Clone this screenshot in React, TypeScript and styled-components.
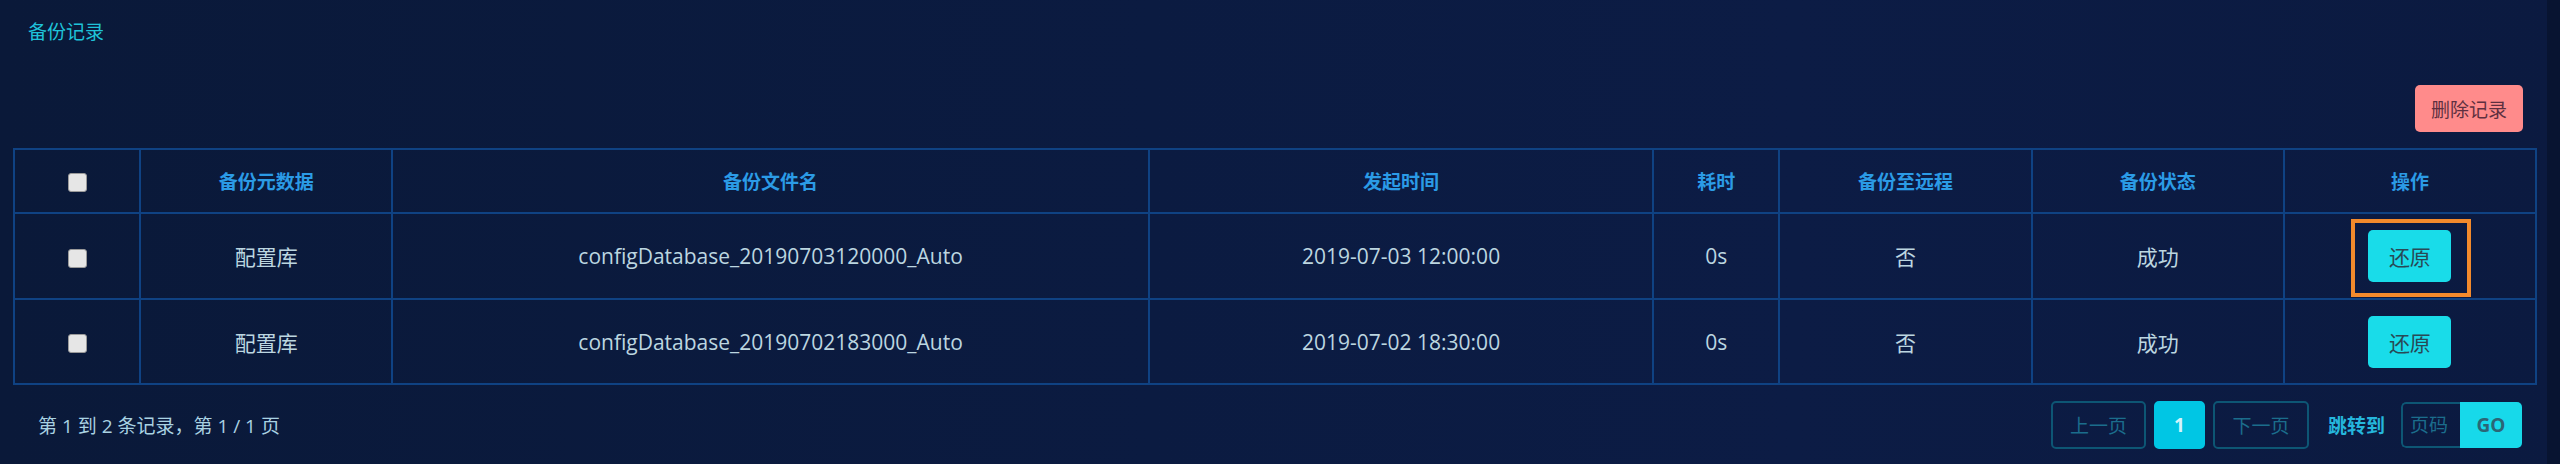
import React from "react";
import styled, { createGlobalStyle } from "styled-components";

const Global = createGlobalStyle`
  html, body { margin: 0; padding: 0; background: #0b1a3d; }
  body { font-family: "Open Sans", "Noto Sans CJK SC", sans-serif; }
  * { box-sizing: border-box; }
`;

const FONT = `"Open Sans", "Noto Sans CJK SC", sans-serif`;

const Page = styled.div`
  width: 2560px;
  height: 464px;
  display: flex;
  overflow: hidden;
  background: linear-gradient(90deg, #0a1939 0%, #0b1b41 45%, #0c1c45 70%, #0b1a40 100%);
`;

const Panel = styled.section`
  flex: 1;
  display: flex;
  flex-direction: column;
  padding: 20px 10px 0 13px;
`;

const Edge = styled.div`
  width: 13px;
  background: #081431;
`;

const Title = styled.h2`
  margin: 0 0 0 15px;
  font-size: 19px;
  line-height: 24px;
  font-weight: 400;
  color: #1fc3d9;
`;

const Toolbar = styled.div`
  display: flex;
  justify-content: flex-end;
  padding-right: 14px;
  margin-top: 41px;
`;

const DeleteButton = styled.button`
  width: 108px;
  height: 47px;
  border: none;
  border-radius: 5px;
  background: #ff8b8b;
  color: #5e3040;
  font-family: ${FONT};
  font-size: 19px;
  padding: 0;
`;

const Table = styled.table`
  margin-top: 16px;
  width: 100%;
  border-collapse: collapse;
  table-layout: fixed;
  border: 2px solid #0f4283;
`;

const HeadCell = styled.th`
  height: 64px;
  padding: 0;
  border: 2px solid #0f4283;
  color: #2b9be6;
  font-size: 19px;
  font-weight: 700;
  text-align: center;
  vertical-align: middle;
`;

const Cell = styled.td<{ $h: number }>`
  height: ${(p) => p.$h}px;
  padding: 0;
  border: 2px solid #0f4283;
  color: #bcd6e0;
  font-size: 21px;
  text-align: center;
  vertical-align: middle;
`;

const Check = styled.input`
  appearance: none;
  -webkit-appearance: none;
  width: 19px;
  height: 19px;
  margin: 0;
  border: 1px solid #9a9a9a;
  border-radius: 3px;
  background: #e6e6e6;
  vertical-align: middle;
`;

const RestoreWrap = styled.span`
  position: relative;
  display: inline-block;
  vertical-align: middle;
`;

const RestoreButton = styled.button`
  display: block;
  width: 83px;
  height: 52px;
  border: none;
  border-radius: 5px;
  background: #19dce9;
  color: #284a56;
  font-family: ${FONT};
  font-size: 21px;
  padding: 0;
`;

const Highlight = styled.span`
  position: absolute;
  top: -11px;
  left: -17px;
  right: -20px;
  bottom: -15px;
  border: 4px solid #f28a2c;
  pointer-events: none;
`;

const Footer = styled.div`
  margin-top: 16px;
  height: 48px;
  display: flex;
  align-items: center;
  justify-content: space-between;
  padding: 0 15px 0 25px;
`;

const Summary = styled.span`
  color: #a9d2e2;
  font-size: 19px;
  white-space: pre;
`;

const Pager = styled.div`
  display: flex;
  align-items: center;
`;

const PageBtn = styled.button<{ $w: number; $active?: boolean }>`
  width: ${(p) => p.$w}px;
  height: 48px;
  margin-right: 8px;
  border-radius: 5px;
  border: 2px solid ${(p) => (p.$active ? "#00c6e4" : "#0d5674")};
  background: ${(p) => (p.$active ? "#00c6e4" : "transparent")};
  color: ${(p) => (p.$active ? "#d4f4fb" : "#1b6d8c")};
  font-family: ${FONT};
  font-size: 19px;
  font-weight: ${(p) => (p.$active ? 700 : 400)};
  padding: 0;
`;

const JumpLabel = styled.span`
  margin: 0 16px 0 11px;
  color: #25b6dc;
  font-size: 19px;
  font-weight: 700;
`;

const InputGroup = styled.div`
  display: flex;
  height: 46px;
  border-radius: 5px;
  overflow: hidden;
`;

const PageInput = styled.input`
  width: 59px;
  height: 46px;
  border: 2px solid #0d5674;
  border-right: none;
  border-radius: 5px 0 0 5px;
  background: transparent;
  color: #1b6d8c;
  font-family: ${FONT};
  font-size: 19px;
  padding: 0 0 0 7px;
  outline: none;
  &::placeholder { color: #1b6d8c; }
`;

const GoButton = styled.button`
  width: 62px;
  height: 46px;
  border: none;
  background: #17d9ea;
  color: #2b6676;
  font-family: ${FONT};
  font-size: 19px;
  font-weight: 700;
  padding: 0;
`;

const columns = [
  { key: "chk", w: 5 },
  { key: "meta", w: 10, label: "备份元数据" },
  { key: "file", w: 30, label: "备份文件名" },
  { key: "time", w: 20, label: "发起时间" },
  { key: "cost", w: 5, label: "耗时" },
  { key: "remote", w: 10, label: "备份至远程" },
  { key: "status", w: 10, label: "备份状态" },
  { key: "op", w: 10, label: "操作" },
];

const rows = [
  { meta: "配置库", file: "configDatabase_20190703120000_Auto", time: "2019-07-03 12:00:00", cost: "0s", remote: "否", status: "成功", h: 86, marked: true },
  { meta: "配置库", file: "configDatabase_20190702183000_Auto", time: "2019-07-02 18:30:00", cost: "0s", remote: "否", status: "成功", h: 85, marked: false },
];

export default function App() {
  return (
    <>
      <Global />
      <Page>
        <Panel>
          <Title>备份记录</Title>
          <Toolbar>
            <DeleteButton>删除记录</DeleteButton>
          </Toolbar>
          <Table>
            <colgroup>
              {columns.map((c) => (
                <col key={c.key} style={{ width: `${c.w}%` }} />
              ))}
            </colgroup>
            <thead>
              <tr>
                <HeadCell>
                  <Check type="checkbox" />
                </HeadCell>
                {columns.slice(1).map((c) => (
                  <HeadCell key={c.key}>{c.label}</HeadCell>
                ))}
              </tr>
            </thead>
            <tbody>
              {rows.map((r, i) => (
                <tr key={i}>
                  <Cell $h={r.h}>
                    <Check type="checkbox" />
                  </Cell>
                  <Cell $h={r.h}>{r.meta}</Cell>
                  <Cell $h={r.h}>{r.file}</Cell>
                  <Cell $h={r.h}>{r.time}</Cell>
                  <Cell $h={r.h}>{r.cost}</Cell>
                  <Cell $h={r.h}>{r.remote}</Cell>
                  <Cell $h={r.h}>{r.status}</Cell>
                  <Cell $h={r.h}>
                    <RestoreWrap>
                      <RestoreButton>还原</RestoreButton>
                      {r.marked && <Highlight />}
                    </RestoreWrap>
                  </Cell>
                </tr>
              ))}
            </tbody>
          </Table>
          <Footer>
            <Summary>第 1 到 2 条记录，第 1 / 1 页</Summary>
            <Pager>
              <PageBtn $w={95}>上一页</PageBtn>
              <PageBtn $w={51} $active>1</PageBtn>
              <PageBtn $w={96}>下一页</PageBtn>
              <JumpLabel>跳转到</JumpLabel>
              <InputGroup>
                <PageInput placeholder="页码" />
                <GoButton>GO</GoButton>
              </InputGroup>
            </Pager>
          </Footer>
        </Panel>
        <Edge />
      </Page>
    </>
  );
}
